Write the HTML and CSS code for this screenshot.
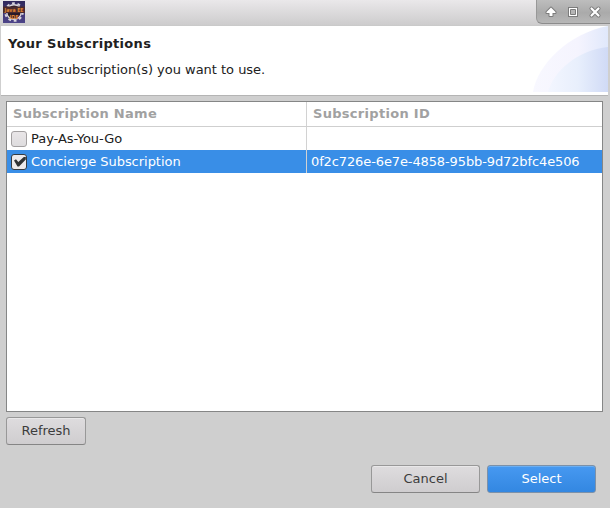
FILE: index.html
```
<!DOCTYPE html>
<html lang="en">
<head>
<meta charset="utf-8">
<title>Your Subscriptions</title>
<link rel="stylesheet" href="styles.css">
</head>
<body>
<div class="dialog">
  <div class="titlebar">
    <svg class="app-icon" width="22" height="22" viewBox="0 0 22 22">
      <defs><linearGradient id="app" x2="0" y2="1"><stop offset="0" stop-color="#30285c"/><stop offset="1" stop-color="#4d4489"/></linearGradient></defs>
      <rect width="22" height="22" fill="url(#app)"/>
      <circle cx="11" cy="11" r="8.8" fill="none" stroke="#d8d4dc" stroke-width="2" stroke-dasharray="2.8 2.800"/>
      <circle cx="11" cy="11" r="7.3" fill="#291a29" stroke="#dcd6dc" stroke-width="1.4"/>
      <rect y="5.500" width="22" height="6.500" fill="#4b2a2c"/>
      <g class="app-letters"><text x="1.500" y="10.800" textLength="19" lengthAdjust="spacingAndGlyphs">Java EE</text><text x="6.500" y="17.500" textLength="9" lengthAdjust="spacingAndGlyphs">IDE</text></g>
    </svg>
    <div class="controls">
      <svg width="74" height="24" viewBox="0 0 74 24">
        <path d="M15 7.500l4.500 4.500v1h-3v3h-3v-3h-3v-1z" fill="#fff" stroke="#7c7c7c" stroke-width="2" stroke-linejoin="round" paint-order="stroke"/>
        <path d="M32 7h10v10h-10z" fill="#7c7c7c"/>
        <path d="M33 8h8v8h-8z" fill="#fff"/>
        <path d="M34.500 9.500h5v5h-5z" fill="#b5b5b5" stroke="#7c7c7c"/>
        <path d="M55.500 8.500l7 7M62.500 8.500l-7 7" fill="none" stroke="#7c7c7c" stroke-width="4" stroke-linecap="round"/>
        <path d="M55.500 8.500l7 7M62.500 8.500l-7 7" fill="none" stroke="#fff" stroke-width="2.200" stroke-linecap="round"/>
      </svg>
    </div>
  </div>
  <header class="banner">
    <div class="banner-text">
      <h1>Your Subscriptions</h1>
      <p>Select subscription(s) you want to use.</p>
    </div>
    <svg class="banner-art" width="75" height="66" viewBox="0 0 75 66">
      <defs>
        <linearGradient id="outer"><stop offset="0" stop-color="#f8f8ff"/><stop offset=".6" stop-color="#f5f4fe"/><stop offset="1" stop-color="#e0e8fb"/></linearGradient>
        <linearGradient id="inner"><stop offset="0" stop-color="#f3f6ff"/><stop offset=".5" stop-color="#e8effc"/><stop offset="1" stop-color="#d0daf6"/></linearGradient>
      </defs>
      <path d="M0 66C4 39 36 7 75 0V66z" fill="url(#outer)"/>
      <path d="M15 66C20 46 44 24 75 21V66z" fill="url(#inner)"/>
    </svg>
  </header>
  <main class="content">
    <div class="table">
      <div class="row head"><div class="cell">Subscription Name</div><div class="cell">Subscription ID</div></div>
      <div class="row"><div class="cell"><span class="check"></span>Pay-As-You-Go</div><div class="cell"></div></div>
      <div class="row selected"><div class="cell"><span class="check"><svg width="14" height="14" viewBox="0 0 14 14"><path d="M2 5.500l2-1.300L6.300 7 11.800 2h2v2.500L7 11.500H5.500z" fill="#303335"/></svg></span>Concierge Subscription</div><div class="cell id">0f2c726e-6e7e-4858-95bb-9d72bfc4e506</div></div>
    </div>
    <button class="button refresh">Refresh</button>
  </main>
  <footer class="actions">
    <button class="button">Cancel</button>
    <button class="button primary">Select</button>
  </footer>
</div>
</body>
</html>
```

FILE: styles.css
```
* { box-sizing: border-box; }
body { margin: 0; font: 13px/16px "DejaVu Sans", sans-serif; color: #212121; }
.dialog { width: 610px; height: 508px; background: #cfcfcf; display: flex; flex-direction: column; overflow: hidden; }
.titlebar { height: 26px; flex: none; display: flex; justify-content: space-between; align-items: flex-start; padding-left: 3px; background: linear-gradient(#eae8ea, #cdcccd); border-bottom: 1px solid #cacaca; }
.app-icon { margin-top: 1px; }
.app-letters { font: bold 5.6px "DejaVu Sans", sans-serif; fill: #e08532; }
.controls { width: 74px; height: 24px; background: linear-gradient(#bdbdbd, #aaa 55%, #b7b7b7); border-left: 1px solid #989898; border-bottom: 1px solid #8c8c8c; border-bottom-left-radius: 6px; }
.controls svg { display: block; margin-left: -1px; }
.banner { height: 70px; flex: none; margin: 0 2px 0 1px; background: #fff; border-bottom: 1px solid #b4b4b4; display: flex; justify-content: space-between; }
.banner-text { padding: 10px 0 0 7px; }
h1 { margin: 0; font-size: 13px; line-height: 16px; letter-spacing: .32px; }
p { margin: 10px 0 0 5px; letter-spacing: -.02px; }
.content { padding: 5px 7px 0 6px; }
.table { height: 311px; border: 1px solid #858686; background: #fff; }
.row { height: 23px; display: grid; grid-template-columns: 300px 1fr; }
.cell { padding-left: 4px; display: flex; align-items: center; letter-spacing: -.03px; }
.cell:first-child { border-right: 1px solid #d2d2d2; }
.head { height: 25px; border-bottom: 1px solid #cfcfcf; color: #a1a1a1; font-weight: bold; }
.head .cell { padding-left: 6px; letter-spacing: .3px; }
.id { letter-spacing: -.115px; }
.selected { background: #398ee7; color: #fff; }
.check { width: 16px; height: 16px; margin-right: 4px; border: 1px solid #a3a0a1; border-radius: 3px; background: linear-gradient(#e9e6e8, #dedcde); }
.check svg { display: block; }
.selected .check { border-color: #343b42; background: #eceaec; }
.button { width: 109px; height: 28px; padding: 0; border: 1px solid #989898; border-bottom-color: #858585; border-radius: 3px; background: linear-gradient(#dedcde, #cfcdcf); box-shadow: inset 0 1px #e9e8e9; font: inherit; color: #3c3c3c; }
.refresh { display: block; width: 80px; margin-top: 5px; }
.actions { display: flex; justify-content: flex-end; gap: 7px; margin-top: 20px; padding-right: 14px; }
.primary { border-color: #7c91a9; background: linear-gradient(#4799f1, #3387e1); box-shadow: inset 0 1px #6caff2; color: #fff; }
```
